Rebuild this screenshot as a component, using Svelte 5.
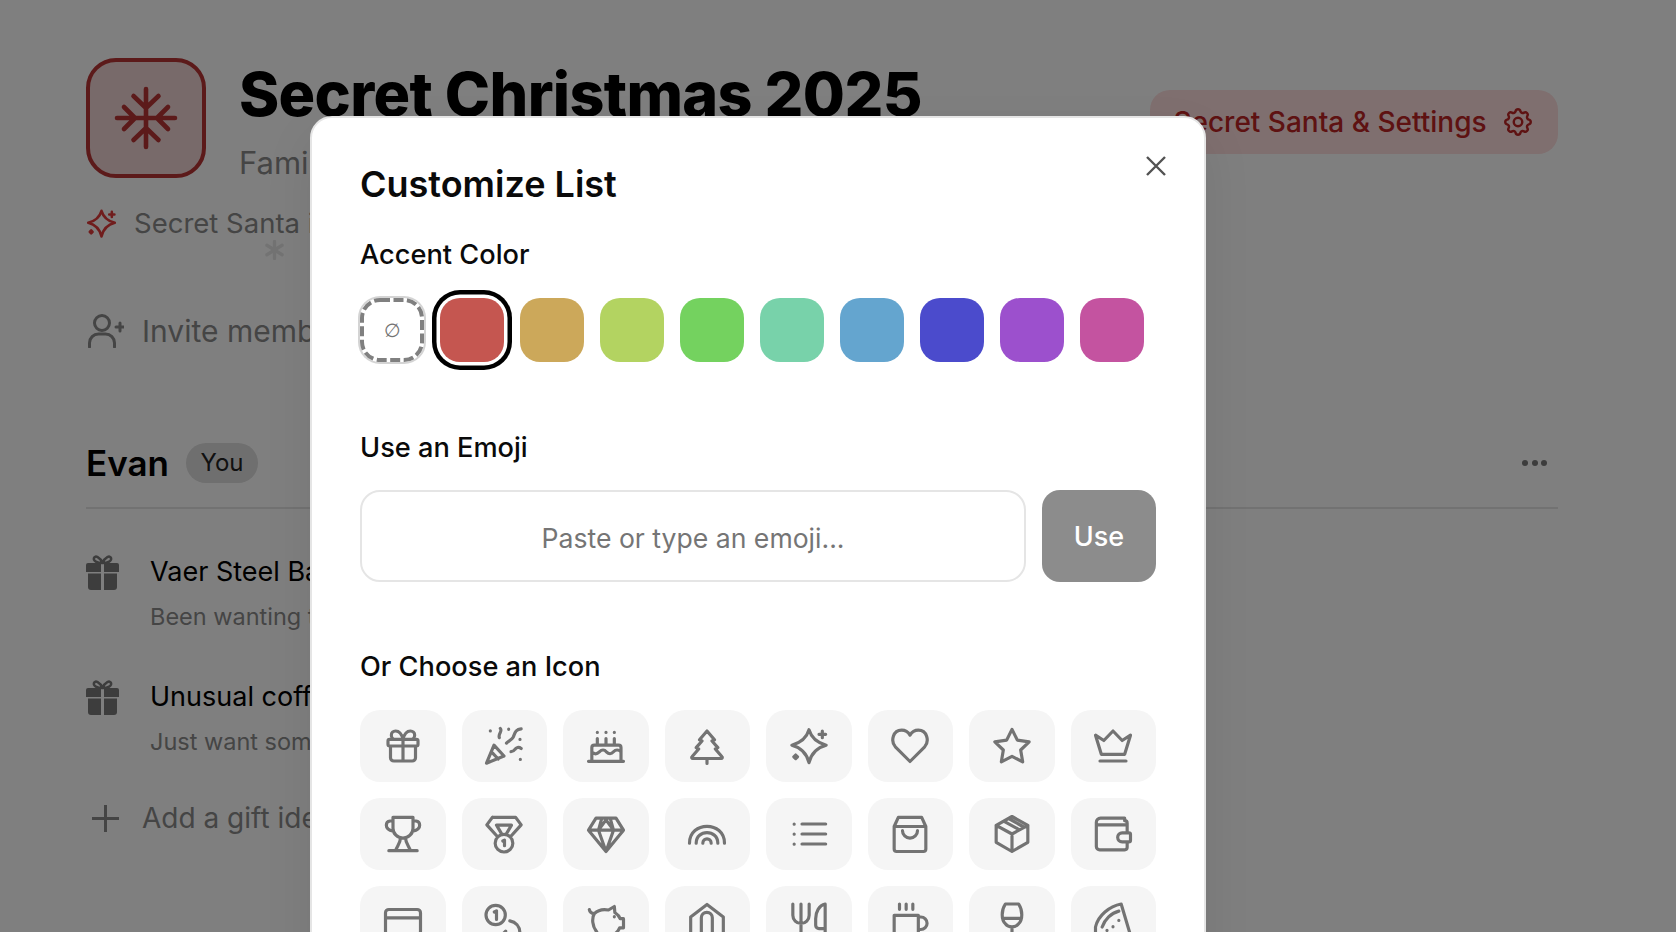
<script>
  const swatches = ['#c55650', '#cca85a', '#b3d361', '#74d25f', '#78d2aa', '#64a5cf', '#4b4bcc', '#9c50cd', '#c453a0'];
  const sparkle = 'M12 2.200Q14 9.300 22.300 11.500Q14 13.600 12 22Q10 13.600 1.700 11.500Q10 9.300 12 2.200ZM20 3v4M18 5h4M4 17.400L5.100 18.500L4 19.600L2.900 18.500Z';
  const icons = [
    ['M3 8m0 1a1 1 0 0 1 1-1h16a1 1 0 0 1 1 1v2a1 1 0 0 1-1 1h-16a1 1 0 0 1-1-1zM12 8v13M19.500 12v7a2 2 0 0 1-2 2h-11a2 2 0 0 1-2-2v-7M7.500 8a2.500 2.500 0 0 1 0-5a4.800 8 0 0 1 4.500 5a4.800 8 0 0 1 4.500-5a2.500 2.500 0 0 1 0 5'],
    ['M1.500 22.300L6 11.500L12 18ZM4.500 15.500L8.500 19.800M9.800 1.500c1.500 1.700-1.500 3 -.6 5.500M22.300 1.700c-3.500.3-3.800 2.800-4.800 5c-.8 1.500-2.500 2-4 3.600M22.300 13.500c-1.500-1.200-3-.6-3.800.6c-.5.8-1.500 1.300-2.300 1.300M3.800 2.900v.1M14.800 1.900v.1M21.600 8v.1M21.800 20v.1'],
    ['M1.500 21.200H22.500M3.500 21V13a1.500 1.500 0 0 1 1.500-1.500H19.500a1.500 1.500 0 0 1 1.500 1.500V21M3.500 15.500c1.500 1.500 3 1.500 4.500 0s3-1.500 4.200 0c1.500 1.500 3 1.500 4.300 0s3-1.500 4.500 0M6.800 7.500V11.500M12 7.500V11.500M17 7.500V11.500M6.800 3.800v.1M12 3.800v.1M17 3.800v.1'],
    ['M12 3L16.500 8.300L15 9L18.500 13L17 13.800L21 18.500A.6.6 0 0 1 20.500 19.500H3.500A.6.6 0 0 1 3 18.500L7 13.800L5.500 13L9 9L7.500 8.300ZM12 19.500V22.500'],
    [sparkle],
    ['M12 21.300L3.200 12.500C.2 9 1.800 2.500 7 2.500C9.300 2.500 11 3.800 12 5.500C13 3.800 14.700 2.500 17 2.500C22.200 2.500 23.800 9 20.800 12.500Z'],
    ['M12 2L15.200 8.500L22.300 9.500L17.200 14.400L18.400 21.500L12 18.200L5.600 21.500L6.800 14.400L1.700 9.500L8.800 8.500Z'],
    ['M1.500 5.500L6.500 8.700L12 3L17.500 8.700L22.500 5.500L19 17H5ZM4.200 21H19.800'],
    ['M6 2H18V8.500A6 6 0 0 1 6 8.500ZM6 4.200H4.200A2.500 2.500 0 0 0 2 6.700C2 8.500 3.800 9.800 6.200 10.300M18 4.200H19.800A2.500 2.500 0 0 1 22 6.700C22 8.500 20.200 9.800 17.800 10.300M10.500 14.300C10.500 17 9 18.500 7.500 22M13.500 14.300C13.500 17 15 18.500 16.500 22M3.500 22H20.500'],
    ['M5 2H19L22.300 6.500L16 13.500M5 2L1.700 6.500L8 13.500M7.500 6.700H16.500L13.500 11.800M7.500 6.700L10.500 11.800M11.300 16.200L12.300 15.700V19M12 17.500m-5.300 0a5.300 5.300 0 1 0 10.600 0a5.300 5.300 0 1 0-10.600 0'],
    ['M6 2.500H18L22.500 9.700L12 22.500L1.500 9.700ZM1.500 9.700H22.500M7.500 9.700L12 22.500L16.500 9.700M9.500 2.500L7.500 9.700L12 3.500L16.500 9.700L14.500 2.500'],
    ['M1.500 17.500C1.500 4 22.500 4 22.500 17.500M5.500 17.500C5.500 9 18.500 9 18.500 17.500M9.500 17.500C9.500 14 14.500 14 14.500 17.500'],
    ['M7.800 6H22M7.800 12H22M7.800 18H22M3.100 6v.1M3.100 12v.1M3.100 18v.1'],
    ['M5 2H19L21.500 7.500V21A1.500 1.500 0 0 1 20 22.500H4A1.500 1.500 0 0 1 2.500 21V7.500ZM2.500 7.500H21.500M7.500 10a4.500 4.500 0 0 0 9 0'],
    ['M12 1.500L21.500 6.800V17L12 22.500L2.500 17V6.800ZM2.500 6.800L12 12L21.500 6.800M12 12V22.500M7 4.300L16.500 9.500M10 2.700L19 7.800'],
    ['M20.500 11V5.500A1.500 1.500 0 0 0 19 4V2.500H4.500A2.500 2.500 0 0 0 2 5V19.500A2 2 0 0 0 4 21.500H19A1.500 1.500 0 0 0 20.500 20V16.700M2.300 6.500H20.500M17.500 11.300H21.500A1 1 0 0 1 22.500 12.300V15.700A1 1 0 0 1 21.500 16.700H17.500A2.700 2.700 0 0 1 17.500 11.300Z'],
    ['M3.500 4.500H20.500A2 2 0 0 1 22.500 6.500V17.500A2 2 0 0 1 20.500 19.500H3.500A2 2 0 0 1 1.500 17.500V6.500A2 2 0 0 1 3.500 4.500ZM1.500 9.500H22.500'],
    ['M7 7.800m-5.800 0a5.800 5.800 0 1 0 11.600 0a5.800 5.800 0 1 0-11.600 0M6.200 6L7.500 5.300V10.500M15.500 11.300C19 12 21.500 14.500 21.500 18.500M8 22.500L13 17.500'],
    ['M2 4.500C2.200 6 3.500 6.800 5 7C6.500 5.500 9.500 4 13.500 4.800L17 2.700L17.300 6.300C18.800 7.300 20 8.500 20.500 10H22.500V15.500H20.200C19.700 17 18.500 18.200 17.500 19V24M5 7C3.500 9.500 3.500 14.500 6.500 18V24M17 8.800v.1'],
    ['M2.200 24V9L12 1.500L21.800 9V24M8.600 24V9.500A3.300 3.300 0 0 1 15.200 9.500V24'],
    ['M2.300 1.200V8A4.900 4.900 0 0 0 12.100 8V1.200M7.200 1.200V24M21.700 1.200C18 2 16 6 16 10V14A2 2 0 0 0 18 16H21.700M21.700 1.200V24'],
    ['M5.700 1.200V4.400M9.700 1.200V4.400M13.700 1.200V4.400M2.500 8H17V19A3 3 0 0 1 14 22H5.500A3 3 0 0 1 2.500 19ZM17 9H18.500A3.700 3.700 0 0 1 18.500 16.500H17'],
    ['M8 1.200H16C18.500 5 18.500 10.500 16 13C14 15.500 10 15.500 8 13C5.500 10.500 5.500 5 8 1.200ZM6.500 9.800H17.500M12 15V24'],
    ['M16.900 1.200C10 2.500 3 8 1.500 15V24M16.900 1.200L22.500 20M15.500 5.500C11 6.500 7 10.500 5.500 15M12 14.800v.1M8.400 17v.1M15.500 11v.1']
  ];
</script>

<div class="page">
  <header class="head">
    <div class="tile">
      <svg viewBox="-32 -32 64 64" class="flake">
        <path d="M0-29V29M-29 0H29M-12.500-22L0-10L12.500-22M-12.500 22L0 10L12.500 22M-22-11L-11 0L-22 11M22-11L11 0L22 11"/>
      </svg>
    </div>
    <div class="heading">
      <h1>Secret Christmas 2025</h1>
      <p class="family">Family list</p>
    </div>
    <button class="settings">
      <span>Secret Santa &amp; Settings</span>
      <svg viewBox="0 0 24 24" class="gear"><path d="M10.325 4.317c.426-1.756 2.924-1.756 3.350 0a1.724 1.724 0 0 0 2.573 1.066c1.543-.94 3.310.826 2.370 2.370a1.724 1.724 0 0 0 1.065 2.572c1.756.426 1.756 2.924 0 3.350a1.724 1.724 0 0 0-1.066 2.573c.94 1.543-.826 3.310-2.370 2.370a1.724 1.724 0 0 0-2.572 1.065c-.426 1.756-2.924 1.756-3.350 0a1.724 1.724 0 0 0-2.573-1.066c-1.543.94-3.310-.826-2.370-2.370a1.724 1.724 0 0 0-1.065-2.572c-1.756-.426-1.756-2.924 0-3.350a1.724 1.724 0 0 0 1.066-2.573c-.94-1.543.826-3.310 2.370-2.370c1 .608 2.296.07 2.572-1.065z"/><circle cx="12" cy="12" r="3"/></svg>
    </button>
  </header>

  <div class="santa">
    <svg viewBox="0 0 24 24" class="spark"><path d={sparkle}/></svg>
    <span>Secret Santa is on</span>
  </div>
  <svg viewBox="-10 -10 20 20" class="ghost"><path d="M0-9V9M-8-5L8 5M-8 5L8-5"/></svg>

  <div class="invite">
    <svg viewBox="0 0 36 34" class="invite-icon"><circle cx="14" cy="9" r="7.500"/><path d="M1.500 33V29a9 9 0 0 1 9-9h7a9 9 0 0 1 9 9v4M28 13H36M32 9V17"/></svg>
    <span>Invite members</span>
  </div>

  <section class="member">
    <div class="member-head">
      <h2>Evan</h2>
      <span class="pill">You</span>
      <span class="dots"><i></i><i></i><i></i></span>
    </div>
    <div class="gift">
      <svg viewBox="0 0 33 35" class="gift-icon"><path class="bow" d="M16.500 8C14 2 9 0 8 3C7 6 11 8 16.500 8C22 8 26 6 25 3C24 0 19 2 16.500 8Z"/><path d="M2 8H15V17H0V10A2 2 0 0 1 2 8ZM18 8H31A2 2 0 0 1 33 10V17H18ZM2 18.500H15V35H5A3 3 0 0 1 2 32ZM18 18.500H31V32A3 3 0 0 1 28 35H18Z"/></svg>
      <div>
        <div class="gift-name">Vaer Steel Band</div>
        <div class="gift-note">Been wanting this</div>
      </div>
    </div>
    <div class="gift">
      <svg viewBox="0 0 33 35" class="gift-icon"><path class="bow" d="M16.500 8C14 2 9 0 8 3C7 6 11 8 16.500 8C22 8 26 6 25 3C24 0 19 2 16.500 8Z"/><path d="M2 8H15V17H0V10A2 2 0 0 1 2 8ZM18 8H31A2 2 0 0 1 33 10V17H18ZM2 18.500H15V35H5A3 3 0 0 1 2 32ZM18 18.500H31V32A3 3 0 0 1 28 35H18Z"/></svg>
      <div>
        <div class="gift-name">Unusual coffee</div>
        <div class="gift-note">Just want some</div>
      </div>
    </div>
    <div class="add">
      <svg viewBox="0 0 27 27" class="plus"><path d="M13.500 0V27M0 13.500H27"/></svg>
      <span>Add a gift idea</span>
    </div>
  </section>

  <div class="scrim"></div>

  <div class="modal">
    <button class="close" aria-label="Close">
      <svg viewBox="0 0 20 20"><path d="M1 1L19 19M19 1L1 19"/></svg>
    </button>
    <h3>Customize List</h3>

    <div class="label accent">Accent Color</div>
    <div class="swatches">
      <button class="swatch none">
        <svg viewBox="0 0 64 64" class="dash"><rect x="2" y="2" width="60" height="60" rx="18"/></svg>
        <span>∅</span>
      </button>
      {#each swatches as c, i}
        <button class="swatch" class:picked={i === 0} style="background:{c}" aria-label="color"></button>
      {/each}
    </div>

    <div class="label emoji">Use an Emoji</div>
    <div class="emoji-row">
      <input placeholder="Paste or type an emoji..." />
      <button class="use">Use</button>
    </div>

    <div class="label choose">Or Choose an Icon</div>
    <div class="grid">
      {#each icons as d}
        <button class="ico" aria-label="icon">
          <svg viewBox="0 0 24 24"><path d={d[0]}/></svg>
        </button>
      {/each}
    </div>
  </div>
</div>

<style>
  :global(body) { margin: 0; }
  * { box-sizing: border-box; }
  .page {
    position: relative;
    width: 1676px;
    height: 932px;
    overflow: hidden;
    background: #fff;
    font-family: Inter, "Liberation Sans", sans-serif;
    padding: 58px 118px 0 86px;
    color: #000;
  }
  button { font-family: inherit; border: 0; padding: 0; }
  svg { display: block; fill: none; stroke-linecap: round; stroke-linejoin: round; }

  .head { display: flex; align-items: flex-start; }
  .tile {
    width: 120px; height: 120px; flex: none;
    border: 4px solid #b83434; border-radius: 30px; background: #f0d4d4;
    display: flex; align-items: center; justify-content: center;
  }
  .flake { width: 64px; height: 64px; stroke: #b83434; stroke-width: 4.600; }
  .heading { margin-left: 33px; }
  h1 { margin: 0; font-size: 61px; line-height: 72px; font-weight: 800; letter-spacing: -0.650px; }
  .family { margin: 15px 0 0; font-size: 31px; line-height: 36px; color: #8a8a8a; }
  .settings {
    margin-left: auto; margin-top: 32px;
    width: 408px; height: 64px; border-radius: 20px;
    background: #fedede; color: #bc2424;
    display: flex; align-items: center; justify-content: center; gap: 14px;
    font-size: 28px; font-weight: 500;
  }
  .gear { width: 34px; height: 34px; stroke: #bc2424; stroke-width: 1.700; }

  .santa { display: flex; align-items: center; gap: 17px; margin-top: 22px; font-size: 27.500px; line-height: 40px; color: #8a8a8a; }
  .spark { width: 31px; height: 31px; stroke: #e03a3a; stroke-width: 2; }
  .ghost { position: absolute; left: 265px; top: 240px; width: 19px; height: 20px; stroke: #dedede; stroke-width: 3.500; opacity: .7; }

  .invite { display: flex; align-items: center; gap: 18px; margin-top: 68px; font-size: 30px; line-height: 40px; color: #8a8a8a; padding-left: 2px; }
  .invite-icon { width: 36px; height: 34px; stroke: #8a8a8a; stroke-width: 3; }

  .member { margin-top: 92px; }
  .member-head {
    display: flex; align-items: center;
    border-bottom: 2px solid #e4e4e4; padding-bottom: 24px;
    box-sizing: content-box; height: 40px;
  }
  h2 { margin: 0; font-size: 35px; line-height: 40px; font-weight: 600; }
  .pill { margin-left: 17px; width: 72px; height: 40px; border-radius: 20px; background: #dedede; color: #222; font-size: 24px; line-height: 40px; text-align: center; }
  .dots { margin-left: auto; margin-right: 11px; display: flex; gap: 3.500px; }
  .dots i { width: 6px; height: 6px; border-radius: 50%; background: #7a7a7a; }

  .gift { display: flex; gap: 31px; margin-top: 46px; }
  .gift + .gift { margin-top: 47px; }
  .gift-icon { width: 33px; height: 35px; fill: #7a7a7a; flex: none; }
  .gift-icon .bow { fill: none; stroke: #7a7a7a; stroke-width: 2.500; }
  .gift-name { font-size: 27px; line-height: 34px; }
  .gift-note { font-size: 23.500px; line-height: 32px; margin-top: 12px; color: #8a8a8a; }
  .add { display: flex; align-items: center; gap: 23px; margin-top: 40px; font-size: 28px; line-height: 40px; color: #8a8a8a; padding-left: 6px; }
  .plus { width: 27px; height: 27px; stroke: #8a8a8a; stroke-width: 3; }

  .scrim { position: absolute; inset: 0; background: rgba(0, 0, 0, .5); }

  .modal {
    position: absolute; left: 310px; top: 116px; width: 896px; height: 900px;
    background: #fff; border: 2px solid #e5e5e5; border-radius: 22px;
    padding: 48px;
    box-shadow: 0 20px 50px rgba(0, 0, 0, .08);
  }
  .close { position: absolute; right: 36px; top: 37px; width: 22px; height: 22px; background: none; }
  .close svg { width: 20px; height: 20px; stroke: #525252; stroke-width: 2.400; stroke-linecap: butt; }
  h3 { margin: -5px 0 0; font-size: 36px; line-height: 46px; font-weight: 600; color: #0a0a0a; }
  .label { font-size: 27.200px; line-height: 36px; font-weight: 500; color: #0a0a0a; }
  .accent { margin-top: 30px; }
  .swatches { display: flex; gap: 16px; margin-top: 25px; }
  .swatch { width: 64px; height: 64px; border-radius: 20px; flex: none; }
  .picked { box-shadow: 0 0 0 3.500px #fff, 0 0 0 8px #000; }
  .none {
    position: relative;
    background: #fff; box-shadow: 0 0 0 2px #d4d4d4;
    display: flex; align-items: center; justify-content: center;
    font: 300 19px "DejaVu Sans", sans-serif; color: #737373;
  }
  .dash { position: absolute; inset: 0; width: 64px; height: 64px; }
  .dash rect { stroke: #808080; stroke-width: 4; stroke-dasharray: 10 3.500; stroke-linecap: butt; }
  .emoji { margin-top: 68px; }
  .emoji-row { display: flex; gap: 16px; margin-top: 24px; }
  input {
    flex: 1; min-width: 0; height: 92px; border: 2px solid #e5e5e5; border-radius: 20px;
    font: 400 26.600px Inter, sans-serif; text-align: center; outline: none; padding: 3px 20px 0;
  }
  input::placeholder { color: #757575; opacity: 1; }
  .use { width: 114px; height: 92px; flex: none; border-radius: 18px; background: #8c8c8c; color: #fff; font-size: 27px; font-weight: 500; }
  .choose { margin-top: 67px; }
  .grid { display: grid; grid-template-columns: repeat(8, 1fr); gap: 16px; margin-top: 25px; }
  .ico { height: 72px; border-radius: 20px; background: #f5f5f5; display: flex; align-items: center; justify-content: center; }
  .ico svg { width: 40px; height: 40px; stroke: #737373; stroke-width: 1.900; }
</style>
